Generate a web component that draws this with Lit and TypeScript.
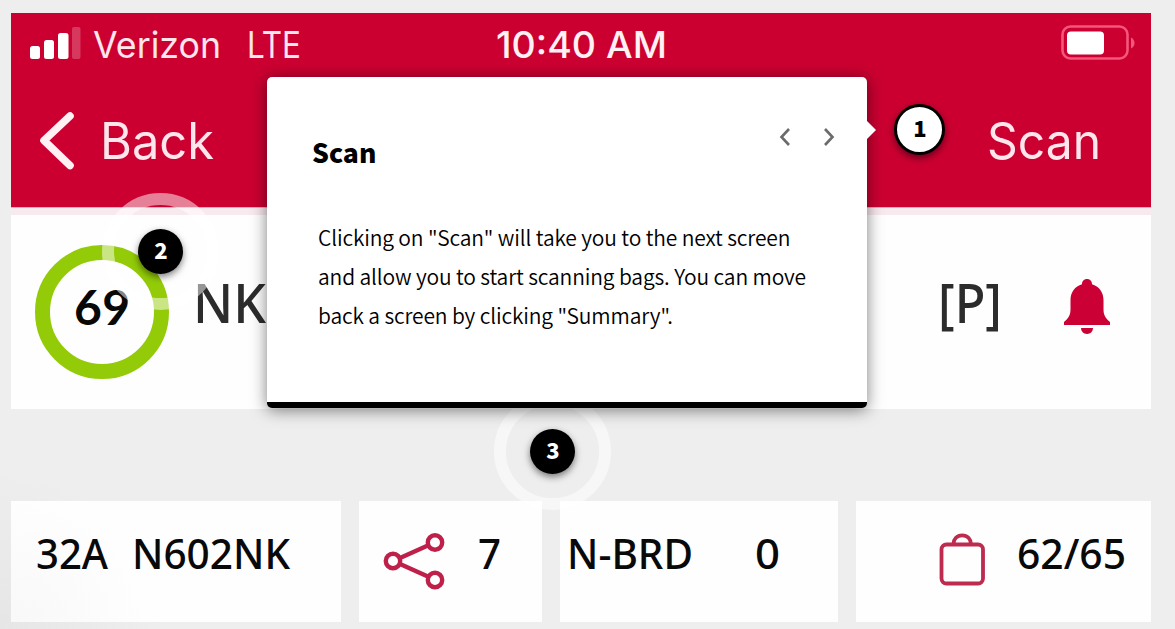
import { LitElement, html, css } from "lit";
import { customElement, property } from "lit/decorators.js";

@customElement("fit-text")
class FitText extends LitElement {
  @property() text = "";
  @property({ type: Number }) width = 100;
  @property({ type: Number }) size = 40;
  @property() adjust = "spacingAndGlyphs";
  static styles = css`
    :host { display: block; flex: none; }
    svg { display: block; overflow: visible; }
    text { fill: currentColor; white-space: pre; }
  `;
  render() {
    return html`<svg width=${this.width} height="60" role="img" aria-label=${this.text}>
      <text x="0" y="45" font-size=${this.size} textLength=${this.width} lengthAdjust=${this.adjust}>${this.text}</text>
    </svg>`;
  }
}

const label = (text: string, width: number, size: number, cls: string, adjust = "spacingAndGlyphs") =>
  html`<fit-text class=${cls} .text=${text} .width=${width} .size=${size} .adjust=${adjust}></fit-text>`;

@customElement("app-root")
class AppRoot extends LitElement {
  static styles = css`
    * { box-sizing: border-box; }
    :host {
      display: block; position: relative; width: 1175px; height: 629px; overflow: hidden;
      background: radial-gradient(circle at 0 629px, #e6e6e6 0, #eeeeee 160px);
      font-family: "Noto Sans CJK SC", "Noto Sans", sans-serif;
    }
    svg { display: block; flex: none; overflow: visible; }
    .screen { padding: 13px 24px 0 11px; }
    .header { height: 194px; background: #cb0031; color: #ffe6ec; font-family: Inter, sans-serif; }
    .status { display: flex; height: 64px; padding-left: 19px; }
    .nav { display: flex; height: 130px; padding-left: 29px; }
    .band { height: 8px; background: #f8e9ee; border-top: 1px solid #e9a9b9; }
    .flight { display: flex; height: 194px; background: #fefefe; color: #2c2c2c; padding-left: 24px; font-family: "Noto Sans", sans-serif; font-weight: 500; }
    .score { flex: none; width: 134px; height: 134px; margin-top: 30px; border: 15px solid #93cb08; border-radius: 50%; padding: 20px 0 0 24px; color: #080808; }
    .cards { display: grid; grid-template-columns: 330px 183px 278px 295px; gap: 18px; margin-top: 92px; height: 121px; color: #090909; font-family: "Noto Sans", sans-serif; font-weight: 500; }
    .card { display: flex; background: #fefefe; padding-top: 23px; }
    .card:first-child { background: radial-gradient(circle at 0 128px, #f8f8f8 0, #fefefe 135px); }
    .signal { margin: 14px 13px 0 0; }
    .carrier { margin-top: -.5px; }
    .lte { margin: -.5px 0 0 26px; }
    .clock { margin: -.5px 0 0 195px; font-weight: 500; color: #fff0f3; }
    .battery { margin: 12px 0 0 394px; }
    .arrow { margin-top: 35px; }
    .back { margin: 36.5px 0 0 26px; }
    .scan { margin: 36.5px 0 0 773px; }
    .points { font-family: Lato, sans-serif; font-weight: 700; margin-top: 0; }
    .airline { margin: 63px 0 0 24px; }
    .gate { margin: 63px 0 0 672px; }
    .bell { margin: 64px 0 0 62px; }
    .seat { margin-left: 25px; }
    .tail { margin-left: 24px; }
    .share { margin: 8px 0 0 25px; }
    .links { margin-left: 34px; }
    .board { margin-left: 7px; }
    .zero { margin-left: 62px; }
    .bag { margin: 8px 0 0 83px; }
    .bags { margin-left: 32px; }

    .ring { position: absolute; width: 117px; height: 117px; border: 12px solid rgba(255,255,255,.5); border-radius: 50%; }
    .marker { position: absolute; display: flex; align-items: center; justify-content: center; width: 45px; height: 45px; border-radius: 50%; background: #000; color: #fff; font-weight: 900; font-size: 22px; line-height: 24px; padding: 0 0 6px 1px; box-shadow: 0 3px 7px rgba(0,0,0,.5); }
    .ring.two { left: 102px; top: 193px; }
    .marker.two { left: 138px; top: 229px; }
    .ring.three { left: 494px; top: 393px; }
    .marker.three { left: 530px; top: 429px; }
    .marker.one { left: 894px; top: 104px; width: 51px; height: 51px; border: 3px solid #000; background: #fff; color: #000; }
    .popup { position: absolute; left: 267px; top: 77px; width: 600px; height: 331px; border-radius: 5px; border-bottom: 6px solid #000; background: #fff; color: #000; box-shadow: 0 2px 16px rgba(0,0,0,.5); }
    .popup::after { content: ""; position: absolute; left: 600px; top: 44px; border: 9px solid transparent; border-left-color: #fff; border-right: 0; }
    .top { display: flex; height: 141px; padding: 51px 32px 0 46px; }
    .title { margin: 4px 0 0 -1px; width: 468px; font-size: 26.5px; line-height: 40px; font-weight: 900; }
    .steps { display: flex; gap: 34px; }
    .body { margin: 0 0 0 51px; font-size: 21px; line-height: 39px; letter-spacing: -.14px; font-weight: 350; white-space: nowrap; }
  `;

  chevron(d: string) {
    return html`<svg width="10" height="18"><path d=${d} fill="none" stroke="#6b6b6b" stroke-width="2.6"/></svg>`;
  }

  render() {
    return html`
      <main class="screen">
        <header class="header">
          <div class="status">
            <svg class="signal" width="50" height="33" fill="#fff">
              <rect x="0" y="19" width="10" height="13" rx="2.5"/><rect x="14" y="13" width="10" height="19" rx="2.5"/>
              <rect x="28" y="6" width="10.5" height="26" rx="2.5"/><rect x="42" y="0" width="8.5" height="32" rx="2" opacity=".22"/>
            </svg>
            ${label("Verizon", 128, 36.5, "carrier")}
            ${label("LTE", 54, 36.5, "lte")}
            ${label("10:40 AM", 171, 36.5, "clock")}
            <svg class="battery" width="74" height="36">
              <rect x="1.5" y="1.5" width="65" height="32" rx="8" fill="none" stroke="#f4567c" stroke-width="2.6"/>
              <rect x="6" y="6.5" width="37" height="23" rx="4" fill="#fff"/>
              <path d="M70 12.5q3.5 2 3.5 5.5t-3.5 5.5z" fill="#f4567c"/>
            </svg>
          </div>
          <nav class="nav">
            <svg class="arrow" width="34" height="58"><path d="M30 4 4 28.5 30 53.5" fill="none" stroke="#fff0f3" stroke-width="7.6" stroke-linecap="round" stroke-linejoin="round"/></svg>
            ${label("Back", 114, 50, "back")}
            ${label("Scan", 114, 50, "scan")}
          </nav>
        </header>
        <div class="band"></div>
        <section class="flight">
          <div class="score">${label("69", 56, 48, "points", "spacing")}</div>
          ${label("NK", 73, 54, "airline")}
          ${label("[P]", 64, 54, "gate")}
          <svg class="bell" width="46" height="56" fill="#cb0034">
            <path d="M23 0c3 0 5 2.2 5 5.2 7 2 11.5 8 11.5 15.800v9c0 6 1.500 8.500 6.500 13v3H0v-3c5-4.500 6.500-7 6.500-13v-9C6.500 13.200 11 7.200 18 5.200 18 2.200 20 0 23 0z"/>
            <path d="M17 49h12c0 3-2.500 6-6 6s-6-3-6-6z"/>
          </svg>
        </section>
        <section class="cards">
          <div class="card">${label("32A", 72, 42, "seat")}${label("N602NK", 158, 42, "tail")}</div>
          <div class="card">
            <svg class="share" width="60" height="58" fill="none" stroke="#be2049" stroke-width="4.4">
              <path d="m16 26 29-13M16 32l29 13"/><circle cx="9" cy="29" r="7.2"/><circle cx="51" cy="10.500" r="7.2"/><circle cx="51" cy="48" r="7.2"/>
            </svg>
            ${label("7", 23, 42, "links")}
          </div>
          <div class="card">${label("N-BRD", 126, 42, "board")}${label("0", 25, 42, "zero")}</div>
          <div class="card">
            <svg class="bag" width="46" height="54" fill="none" stroke="#bd2b4f" stroke-width="3.800">
              <rect x="2.500" y="12.500" width="41.500" height="39" rx="5"/><path d="M14.500 12c0-5 3.500-8.700 8.700-8.700s8.700 3.700 8.700 8.700"/>
            </svg>
            ${label("62/65", 109, 42, "bags")}
          </div>
        </section>
      </main>
      <div class="ring two"></div><div class="marker two">2</div>
      <div class="ring three"></div><div class="marker three">3</div>
      <div class="marker one">1</div>
      <article class="popup">
        <div class="top">
          <h2 class="title">Scan</h2>
          <div class="steps">${this.chevron("M9 1 1.500 9 9 17")}${this.chevron("M1 1 8.500 9 1 17")}</div>
        </div>
        <p class="body">Clicking on "Scan" will take you to the next screen<br>and allow you to start scanning bags. You can move<br>back a screen by clicking "Summary".</p>
      </article>
    `;
  }
}
